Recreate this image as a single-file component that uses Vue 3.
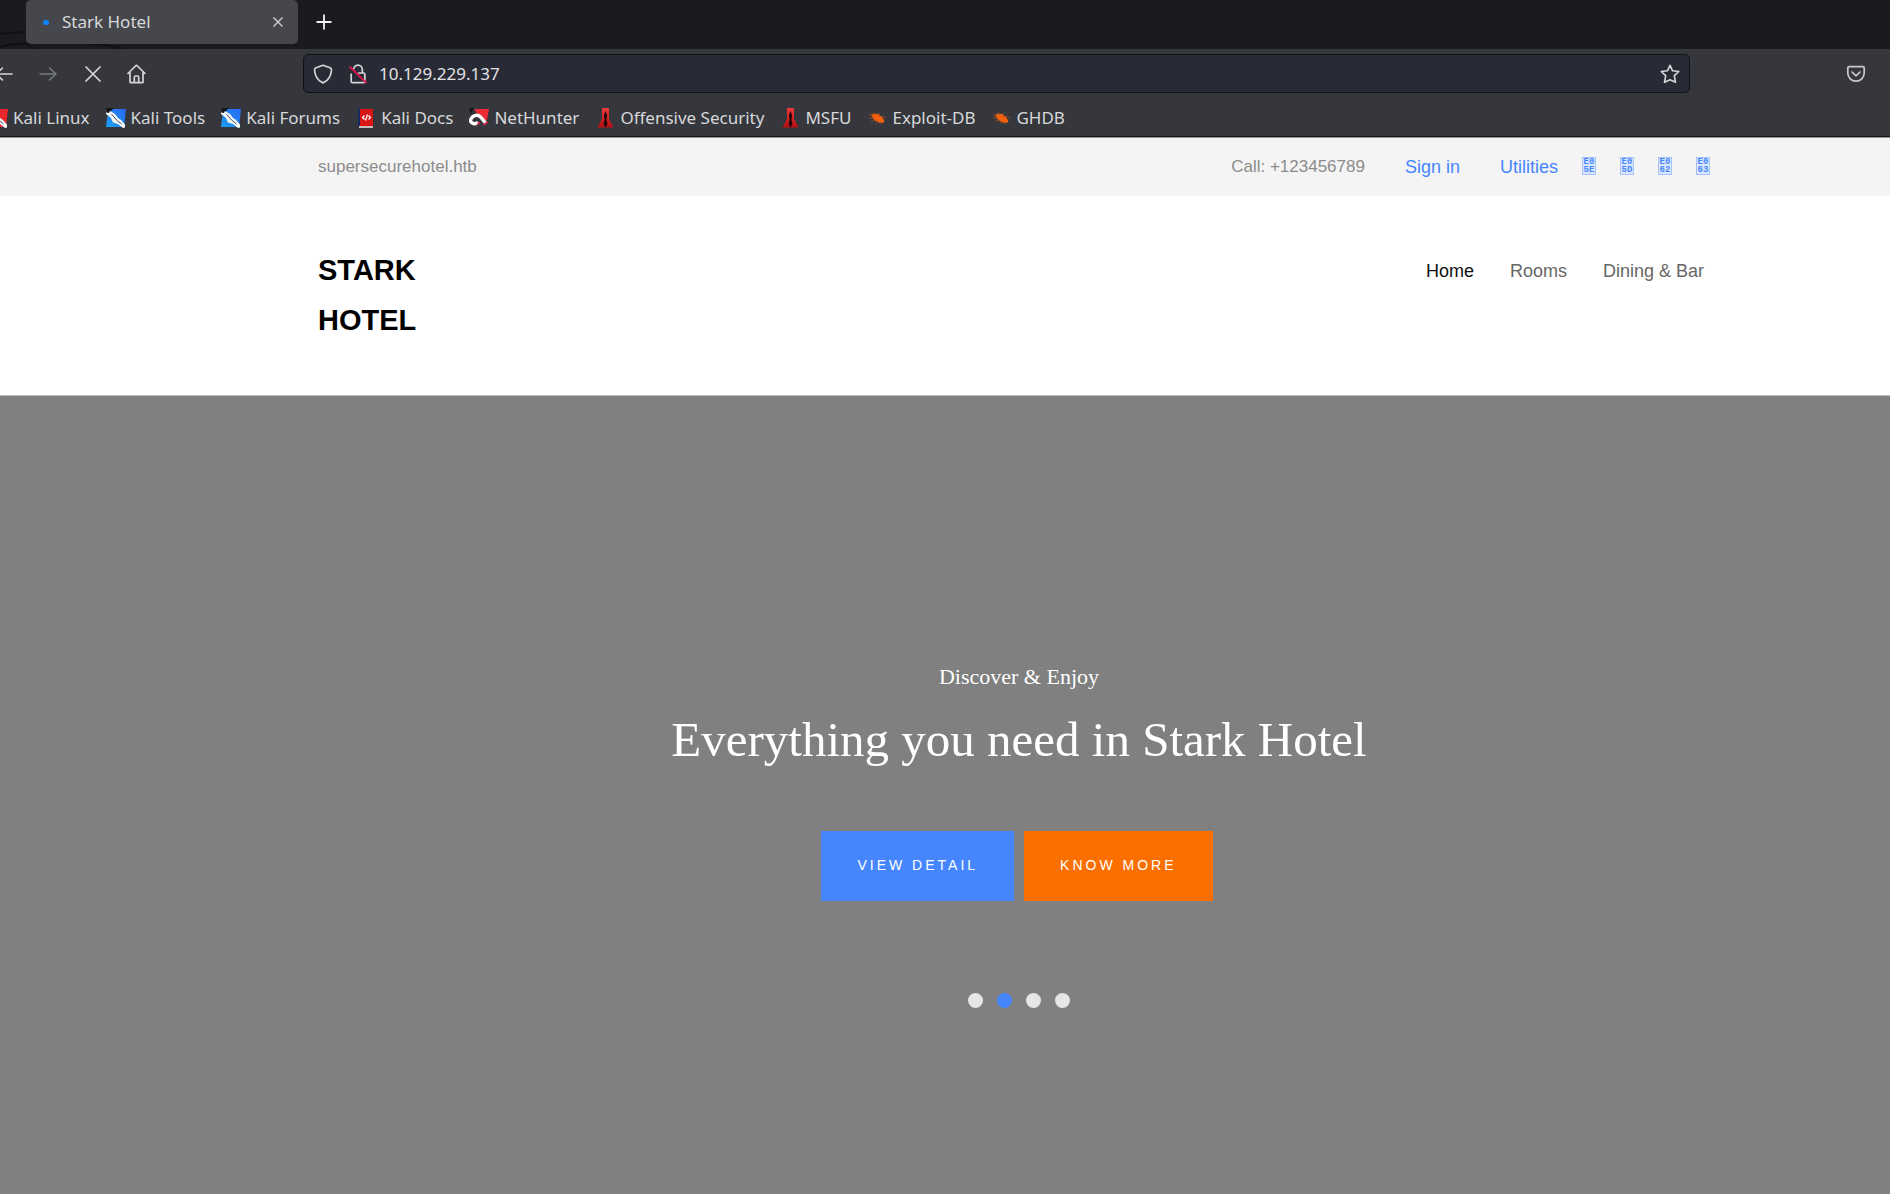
<script setup>
import { ref } from 'vue'

const address = ref('10.129.229.137')
const active = ref(1)
const bookmarks = [
  { label: 'Kali Linux', icon: 'red' },
  { label: 'Kali Tools', icon: 'blue' },
  { label: 'Kali Forums', icon: 'blue' },
  { label: 'Kali Docs', icon: 'docs' },
  { label: 'NetHunter', icon: 'hunter' },
  { label: 'Offensive Security', icon: 'tower' },
  { label: 'MSFU', icon: 'tower' },
  { label: 'Exploit-DB', icon: 'bug' },
  { label: 'GHDB', icon: 'bug' },
]
const social = [['E0', '5E'], ['E0', '5D'], ['E0', '62'], ['E0', '63']]
const pages = ['Home', 'Rooms', 'Dining & Bar']
</script>

<template>
  <div class="browser">
    <div class="tabs">
      <svg class="swirl" width="150" height="49" viewBox="0 0 150 49" fill="none" stroke="#101114" stroke-width="2" aria-hidden="true">
        <path d="M0 34Q14 32 28 32M0 47Q14 43 30 44M86 44Q108 44 122 49M26 44l8 5" />
      </svg>
      <div class="tab">
        <span class="loading"></span>
        <span class="tab-title">Stark Hotel</span>
        <button class="plain" aria-label="Close tab">
          <svg width="12" height="12" viewBox="0 0 12 12" fill="none" stroke="#d0d0d2" stroke-width="1.4"><path d="M1.5 1.5l9 9M10.5 1.5l-9 9" /></svg>
        </button>
      </div>
      <button class="plain" aria-label="New tab">
        <svg width="16" height="16" viewBox="0 0 16 16" fill="none" stroke="#f2f2f4" stroke-width="1.8"><path d="M8 .5v15M.5 8h15" /></svg>
      </button>
    </div>

    <div class="toolbar">
      <div class="nav-buttons">
        <button class="plain" aria-label="Back">
          <svg width="20" height="20" viewBox="0 0 20 20" fill="none" stroke="#d6d6d8" stroke-width="1.6" stroke-linecap="round" stroke-linejoin="round"><path d="M17 10H1M7.500 4L1 10l6.500 6" /></svg>
        </button>
        <button class="plain" aria-label="Forward" disabled>
          <svg width="20" height="20" viewBox="0 0 20 20" fill="none" stroke="#77797e" stroke-width="1.6" stroke-linecap="round" stroke-linejoin="round"><path d="M1 10h16M10.500 4L17 10l-6.500 6" /></svg>
        </button>
        <button class="plain" aria-label="Stop">
          <svg width="20" height="20" viewBox="0 0 20 20" fill="none" stroke="#d6d6d8" stroke-width="1.7" stroke-linecap="round"><path d="M3 3l14 14M17 3L3 17" /></svg>
        </button>
        <button class="plain" aria-label="Home">
          <svg width="20" height="20" viewBox="0 0 20 20" fill="none" stroke="#d6d6d8" stroke-width="1.7" stroke-linecap="round" stroke-linejoin="round"><path d="M1 9.500L8.500 2q1-1 2 0L18 9.500M3 8.500V18a.7.7 0 0 0 .7.700h11.600a.7.7 0 0 0 .7-.7V8.500M7.300 18.500V13.500q0-1.500 1.200-1.500h2q1.200 0 1.200 1.500v5" /></svg>
        </button>
      </div>
      <div class="url">
        <svg width="20" height="20" viewBox="0 0 20 20" fill="none" stroke="#d6d6d8" stroke-width="1.7" stroke-linejoin="round" aria-hidden="true"><path d="M10 1.200l7 2.500q1.500.5 1.500 2Q18 15.500 10 18.900 2 15.500 1.500 5.700q0-1.500 1.500-2z" /></svg>
        <svg class="lock" width="20" height="20" viewBox="0 0 20 20" fill="none" stroke="#d6d6d8" stroke-width="1.700" stroke-linejoin="round" aria-hidden="true"><path d="M3.200 9.500v8q0 1.200 1.200 1.200h11.200q1.200 0 1.200-1.200v-7.300q0-1.200-1.200-1.200H10M5.700 5.500a4.200 4.200 0 0 1 8.600 0V9" /><path d="M1.500 2.500l17 16.500" stroke="#d3194d" stroke-width="1.800" /></svg>
        <input v-model="address" type="text" aria-label="Address" />
        <button class="plain" aria-label="Bookmark this page">
          <svg width="20" height="20" viewBox="0 0 20 20" fill="none" stroke="#d6d6d8" stroke-width="1.600" stroke-linejoin="round"><path d="M10 1.300l2.600 5.500 6.200.7-4.500 4.200 1.200 6.600L10 15.700l-5.500 2.600 1.200-6.600L1.200 7.500l6.200-.7z" /></svg>
        </button>
      </div>
      <button class="plain pocket" aria-label="Save to Pocket">
        <svg width="20" height="20" viewBox="0 0 20 20" fill="none" stroke="#c9c9cb" stroke-width="1.700" stroke-linecap="round" stroke-linejoin="round"><path d="M3 2.700h14q1.200 0 1.200 1.200V9a8.200 8.200 0 0 1-16.400 0V3.900q0-1.200 1.200-1.200zM6 8l4 3.800L14 8" /></svg>
      </button>
    </div>

    <nav class="bookmarks" aria-label="Bookmarks">
      <a v-for="b in bookmarks" :key="b.label" href="#">
        <svg width="20" height="20" viewBox="0 0 20 20" aria-hidden="true">
          <defs>
            <linearGradient id="sky" x1="1" y1="0" x2="0" y2="1"><stop stop-color="#2868f5" /><stop offset="1" stop-color="#1ca0f2" /></linearGradient>
            <linearGradient id="flame" x1="0" y1="0" x2="0" y2="1"><stop stop-color="#ee3b3b" /><stop offset="1" stop-color="#b80d12" /></linearGradient>
          </defs>
          <g v-if="b.icon === 'blue' || b.icon === 'red'">
            <path d="M3 1h17l-2 18H0l1-8z" :fill="b.icon === 'blue' ? 'url(#sky)' : '#e9252d'" />
            <path d="M0 0h8L2 6z" fill="#15171b" />
            <path d="M0 4.500L3 5l1-2 5 3 3 4 3 2 4 4.500v3l-2 .5-5-4-5-1.500-2-4.500-5-4z" fill="#f5f6f8" />
            <path d="M5.500 6l5 6 5 4" fill="none" stroke="#1b2a3c" stroke-width=".8" />
          </g>
          <g v-else-if="b.icon === 'docs'">
            <path d="M2 1h4v18l-4-1z" fill="#172a63" /><path d="M4 1h13v17H4z" fill="#d91414" /><path d="M3 18h14v2H3z" fill="#c9bcbc" />
            <path d="M8.500 7.500L6.500 9.500l2 2M12.500 7.500l2 2-2 2M11.500 6.500l-2 6" fill="none" stroke="#fff" stroke-width="1.300" />
          </g>
          <g v-else-if="b.icon === 'hunter'">
            <path d="M5 1h15l-2 11-3 1-7-8z" fill="#ee2c35" /><path d="M0 0h5L2 6z" fill="#16171b" />
            <path d="M16.500 15L12.500 10Q9 5.500 4 8.500q-4 3.500-1.500 6Q5 17 9 14.500" fill="none" stroke="#fff" stroke-width="3.400" />
            <path d="M14.500 17l4-3M8 17l3-3" stroke="#e0204a" stroke-width="1.600" />
          </g>
          <g v-else-if="b.icon === 'tower'">
            <path d="M7 0h7v11l4.500 8.500h-16L7 11z" fill="url(#flame)" />
            <path d="M10.500 3l1.500 4-.5 5 1 4-2 3.500-2-3.500 1-4L9 7z" fill="#210609" />
          </g>
          <g v-else>
            <path d="M4 7l3-1.500 4 .5 4 3 2.500 4-1.500 2-4-.5-5-2.500z" fill="#f2600c" />
            <path d="M2 6l4 2M7 4.500l2 3M12 5l1 4M1.500 10h5M4 14l4-2.500M15 8l4 2M9 16l1.500-3M13 16v-2" stroke="#a84a20" stroke-width=".8" />
          </g>
        </svg>
        <span>{{ b.label }}</span>
      </a>
    </nav>
  </div>

  <div class="topbar">
    <span>supersecurehotel.htb</span>
    <div class="contact">
      <span>Call: +123456789</span>
      <a href="#">Sign in</a>
      <a href="#">Utilities</a>
      <div class="social">
        <a v-for="s in social" :key="s[1]" href="#" class="code"><span>{{ s[0] }}</span><span>{{ s[1] }}</span></a>
      </div>
    </div>
  </div>

  <header class="header">
    <h1><a href="#">STARK HOTEL</a></h1>
    <nav class="menu" aria-label="Main">
      <a v-for="(p, i) in pages" :key="p" href="#" :class="{ current: i === 0 }">{{ p }}</a>
    </nav>
  </header>

  <main class="hero">
    <p>Discover &amp; Enjoy</p>
    <h2>Everything you need in Stark Hotel</h2>
    <div class="actions">
      <button class="blue">VIEW DETAIL</button>
      <button class="orange">KNOW MORE</button>
    </div>
    <div class="dots">
      <button v-for="n in 4" :key="n" :class="{ on: active === n - 1 }" :aria-label="`Slide ${n}`" @click="active = n - 1"></button>
    </div>
  </main>
</template>

<style>
body {
  background: #fff;
  font-family: "Liberation Sans", Arial, sans-serif;
}
</style>

<style scoped>
* { box-sizing: border-box; }
a { color: inherit; text-decoration: none; }
svg { display: block; flex: none; }
button { border: 0; cursor: pointer; font-family: inherit; }
.plain { background: none; padding: 0; }

.browser {
  background: #35373d;
  border-bottom: 1px solid #97979a;
  color: #d8d8da;
  font: 17px/24px "Noto Sans", sans-serif;
}
.tabs {
  position: relative;
  display: flex;
  align-items: center;
  gap: 18px;
  height: 49px;
  padding: 0 26px 5px;
  background: #1a1b1f;
}
.swirl { position: absolute; left: 0; top: 0; }
.tab {
  position: relative;
  display: flex;
  align-items: center;
  width: 272px;
  height: 44px;
  padding: 0 14px 0 17px;
  border-radius: 5px;
  background: #45474d;
}
.loading { width: 6px; height: 5px; border-radius: 50%; background: #0a84ff; }
.tab-title { flex: 1; margin-left: 13px; }

.toolbar { display: flex; align-items: center; height: 49px; }
.nav-buttons { display: flex; gap: 24px; margin-left: -5px; }
.url {
  flex: 1;
  display: flex;
  align-items: center;
  height: 39px;
  margin: 0 156px;
  padding: 0 9px;
  border: 1px solid #111216;
  border-radius: 5px;
  background: #282a36;
}
.lock { margin: 0 11px 0 15px; }
.url input {
  flex: 1;
  min-width: 0;
  padding: 0;
  border: 0;
  outline: 0;
  background: none;
  color: #e2e2e4;
  font: inherit;
}
.pocket { margin-right: 24px; }

.bookmarks {
  display: flex;
  gap: 16px;
  height: 39px;
  padding-top: 8px;
  border-bottom: 1px solid #15161a;
}
.bookmarks a { display: flex; align-items: center; gap: 5px; height: 24px; white-space: nowrap; }
.bookmarks a:first-child { margin-left: -12px; }

.topbar {
  display: flex;
  justify-content: space-between;
  align-items: center;
  height: 58px;
  padding: 0 180px 0 318px;
  background: #f4f4f4;
  color: #8c8c8c;
  font-size: 17px;
}
.contact { display: flex; align-items: center; }
.contact > a { margin-left: 40px; color: #4586ff; font-size: 18px; }
.social { display: flex; gap: 24px; margin: 0 0 3px 24px; color: #4586ff; }
.code {
  display: flex;
  flex-direction: column;
  align-items: center;
  width: 14px;
  height: 18px;
  border: 1px solid #a5c2fb;
  background: #dbe6fb;
  font: bold 9px/8px "Liberation Mono", monospace;
}

.header {
  display: flex;
  justify-content: space-between;
  align-items: flex-start;
  padding: 49px 186px 50px 318px;
  border-bottom: 1px solid #bfbfbf;
}
.header h1 { width: 120px; margin: 0; color: #000; font-size: 29px; line-height: 50px; }
.menu { display: flex; gap: 36px; padding-top: 14px; color: #666; font-size: 18px; line-height: 24px; }
.menu .current { color: #111; }

.hero {
  display: flex;
  flex-direction: column;
  align-items: center;
  padding: 263px 0 186px 148px;
  background: #808080;
  color: #fff;
}
.hero p { margin: 0; font: 22px/36px "Liberation Serif", serif; }
.hero h2 { margin: 8px 0 54px; font: 49px/74px "Liberation Serif", serif; }
.actions { display: flex; gap: 10px; margin-right: 4px; }
.actions button {
  height: 70px;
  padding: 0 36px 2px;
  color: #fff;
  font-size: 14px;
  letter-spacing: 3px;
}
.actions .blue { background: #4586ff; }
.actions .orange { background: #fa6f00; }
.dots { display: flex; gap: 14px; margin-top: 92px; }
.dots button { width: 15px; height: 15px; padding: 0; border-radius: 50%; background: #e6e6e6; }
.dots .on { background: #4586ff; }
</style>
